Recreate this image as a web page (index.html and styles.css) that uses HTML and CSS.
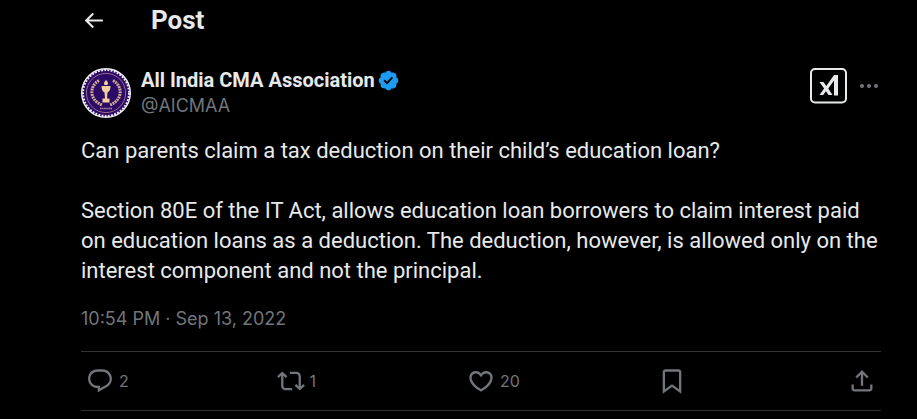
FILE: index.html
```html
<!DOCTYPE html>
<html lang="en">
<head>
<meta charset="utf-8">
<meta name="viewport" content="width=device-width, initial-scale=1">
<title>Post</title>
<link rel="stylesheet" href="styles.css">
</head>
<body>
<main class="page">
  <header class="topbar">
    <button class="icon-button" type="button" aria-label="Back">
      <svg class="icon back" viewBox="0 0 24 24"><path d="M7.414 13l5.043 5.04-1.414 1.42L3.586 12l7.457-7.46 1.414 1.42L7.414 11H21v2H7.414z"/></svg>
    </button>
    <h1 class="title">Post</h1>
  </header>
  <article class="post">
    <div class="author">
      <svg class="avatar" viewBox="0 0 50 50" aria-hidden="true">
        <circle cx="25" cy="25" r="24.500" fill="#2c0b66"/>
        <circle cx="25" cy="25" r="24.300" fill="none" stroke="#f1eef6" stroke-width="1.400"/>
        <circle cx="25" cy="25" r="23" fill="none" stroke="#f1eef6" stroke-width="2" stroke-dasharray="1.8 1.412"/>
        <circle cx="25" cy="25" r="19.600" fill="none" stroke="#a98296" stroke-width=".8"/>
        <g fill="none" stroke="#d3ad91" stroke-width="3" stroke-dasharray="1.9 .8">
          <path d="M18 12.500C8 18 8 32 21 37"/>
          <path d="M32 12.500C42 18 42 32 29 37"/>
        </g>
        <path d="M25 12q3 2.500 1.500 5h-3q-1.500-2 1.500-5zM20.500 18h9q0 5-3 6.500l-.5 6h2.500v4h-7v-4H24l-.5-6q-3-1.500-3-6.500z" fill="#efcf9c"/>
        <path d="M19 40.500h12" stroke="#b48c97" stroke-width="1.600" stroke-dasharray="1.300 .5"/>
      </svg>
      <div class="names">
        <div class="name-row">
          <a class="name" href="#profile">All India CMA Association</a>
          <svg class="verified" viewBox="0 0 22 22" aria-hidden="true"><path d="M20.396 11c-.018-.646-.215-1.275-.57-1.816-.354-.54-.852-.972-1.438-1.246.223-.607.27-1.264.14-1.897-.131-.634-.437-1.218-.882-1.687-.47-.445-1.053-.75-1.687-.882-.633-.13-1.29-.083-1.897.14-.273-.587-.704-1.086-1.245-1.44S11.647 1.62 11 1.604c-.646.017-1.273.213-1.813.568s-.969.854-1.24 1.44c-.608-.223-1.267-.272-1.902-.14-.635.13-1.22.436-1.69.882-.445.47-.749 1.055-.878 1.688-.13.633-.08 1.29.144 1.896-.587.274-1.087.705-1.443 1.245-.356.54-.555 1.17-.574 1.817.02.647.218 1.276.574 1.817.356.54.856.972 1.443 1.245-.224.606-.274 1.263-.144 1.896.13.634.433 1.218.877 1.688.47.443 1.054.747 1.687.878.633.132 1.29.084 1.897-.136.274.586.705 1.084 1.246 1.439.54.354 1.17.551 1.816.569.647-.016 1.276-.213 1.817-.567s.972-.854 1.245-1.44c.604.239 1.266.296 1.903.164.636-.132 1.22-.447 1.68-.907.46-.46.776-1.044.908-1.681s.075-1.299-.165-1.903c.586-.274 1.084-.705 1.439-1.246.354-.54.551-1.17.569-1.816zM9.662 14.85l-3.429-3.428 1.293-1.302 2.072 2.072 4.4-4.794 1.347 1.246z"/></svg>
        </div>
        <a class="handle" href="#profile">@AICMAA</a>
      </div>
      <div class="tools">
        <button class="icon-button" type="button" aria-label="Explain this post">
          <svg class="explain" viewBox="0 0 37 36"><rect x="1" y="1" width="35" height="33.500" rx="4" fill="none" stroke="#e7e9ea" stroke-width="2"/><path d="M9.500 14h4l2.800 4L24 7h4v20.500h-4V12.500L18.300 20.600l4.200 6.400h-4l-2.600-3.800-2.700 3.800H9.500l4.600-6.400z" fill="#e7e9ea"/></svg>
        </button>
        <button class="icon-button" type="button" aria-label="More">
          <svg class="more" viewBox="0 0 20 20"><circle cx="3" cy="10" r="2"/><circle cx="10" cy="10" r="2"/><circle cx="17" cy="10" r="2"/></svg>
        </button>
      </div>
    </div>
    <div class="body">
      <p>Can parents claim a tax deduction on their child’s education loan?</p>
      <p>Section 80E of the IT Act, allows education loan borrowers to claim interest paid on education loans as a deduction. The deduction, however, is allowed only on the interest component and not the principal.</p>
    </div>
    <time class="date" datetime="2022-09-13T22:54">10:54 PM · Sep 13, 2022</time>
    <div class="actions">
      <button class="action" type="button" aria-label="2 replies">
        <svg class="icon" viewBox="0 0 24 24"><path d="M1.751 10c0-4.42 3.584-8 8.005-8h4.366c4.49 0 8.129 3.64 8.129 8.13 0 2.96-1.607 5.68-4.196 7.11l-8.054 4.46v-3.69h-.067c-4.49.1-8.183-3.51-8.183-8.01zm8.005-6c-3.317 0-6.005 2.69-6.005 6 0 3.37 2.77 6.08 6.138 6.01l.351-.01h1.761v2.3l5.087-2.81c1.951-1.08 3.163-3.13 3.163-5.36 0-3.39-2.744-6.13-6.129-6.13H9.756z"/></svg><span>2</span>
      </button>
      <button class="action" type="button" aria-label="1 repost">
        <svg class="icon" viewBox="0 0 24 24"><path d="M4.5 3.88l4.432 4.14-1.364 1.46L5.5 7.55V16c0 1.1.896 2 2 2H13v2H7.5c-2.209 0-4-1.79-4-4V7.55L1.432 9.48.068 8.02 4.5 3.88zM16.5 6H11V4h5.5c2.209 0 4 1.79 4 4v8.45l2.068-1.93 1.364 1.46-4.432 4.14-4.432-4.14 1.364-1.46 2.068 1.93V8c0-1.1-.896-2-2-2z"/></svg><span>1</span>
      </button>
      <button class="action" type="button" aria-label="20 likes">
        <svg class="icon" viewBox="0 0 24 24"><path d="M16.697 5.5c-1.222-.06-2.679.51-3.89 2.16l-.805 1.09-.806-1.09C9.984 6.01 8.526 5.44 7.304 5.5c-1.243.07-2.349.78-2.91 1.91-.552 1.12-.633 2.78.479 4.82 1.074 1.97 3.257 4.27 7.129 6.61 3.87-2.34 6.052-4.64 7.126-6.61 1.111-2.04 1.03-3.7.477-4.82-.561-1.13-1.666-1.84-2.908-1.91zm4.187 7.69c-1.351 2.48-4.001 5.12-8.379 7.67l-.503.3-.504-.3c-4.379-2.55-7.029-5.19-8.382-7.67-1.36-2.5-1.41-4.86-.514-6.67.887-1.79 2.647-2.91 4.601-3.01 1.651-.09 3.368.56 4.798 2.01 1.429-1.45 3.146-2.1 4.796-2.01 1.954.1 3.714 1.22 4.601 3.01.896 1.81.846 4.17-.514 6.67z"/></svg><span>20</span>
      </button>
      <button class="action" type="button" aria-label="Bookmark">
        <svg class="icon" viewBox="0 0 24 24"><path d="M4 4.5C4 3.12 5.119 2 6.5 2h11C18.881 2 20 3.12 20 4.5v18.44l-8-5.71-8 5.71V4.5zM6.5 4c-.276 0-.5.22-.5.5v14.56l6-4.29 6 4.29V4.5c0-.28-.224-.5-.5-.5h-11z"/></svg>
      </button>
      <button class="action" type="button" aria-label="Share">
        <svg class="icon" viewBox="0 0 24 24"><path d="M12 2.59l5.7 5.7-1.41 1.42L13 6.41V16h-2V6.41l-3.3 3.3-1.41-1.42L12 2.59zM21 15l-.02 3.51c0 1.38-1.12 2.49-2.5 2.49H5.5C4.11 21 3 19.88 3 18.5V15h2v3.5c0 .28.22.5.5.5h12.98c.28 0 .5-.22.5-.5L19 15h2z"/></svg>
      </button>
    </div>
  </article>
</main>
</body>
</html>
```
FILE: styles.css
```css
* {
  box-sizing: border-box;
}

body {
  margin: 0;
  background: #000;
  color: #e7e9ea;
  font-family: Inter, "Liberation Sans", sans-serif;
}

button {
  padding: 0;
  border: 0;
  background: none;
  color: inherit;
  font: inherit;
  cursor: pointer;
}

a {
  color: inherit;
  text-decoration: none;
}

svg {
  display: block;
  flex: none;
}

.page {
  padding: 0 36px 0 81px;
}

.topbar {
  display: flex;
  align-items: center;
  gap: 45px;
  height: 40px;
}

.title,
.name,
.body {
  font-family: Roboto, "Liberation Sans", sans-serif;
}

.title {
  margin: 0;
  font-size: 26px;
  line-height: 30px;
  font-weight: 700;
}

.icon {
  width: 28px;
  height: 28px;
  fill: currentColor;
}

.back {
  width: 25px;
  height: 25px;
}

.author {
  display: flex;
  align-items: flex-start;
  gap: 10px;
  padding-top: 28px;
}

.avatar {
  width: 50px;
  height: 50px;
}

.names {
  flex: 1;
  min-width: 0;
  line-height: 25px;
}

.name-row {
  display: flex;
  align-items: center;
  gap: 2px;
}

.name {
  font-size: 20px;
  font-weight: 700;
}

.verified {
  width: 23px;
  height: 23px;
  fill: #1d9bf0;
}

.handle {
  display: block;
  color: #71767b;
  font-size: 18px;
}

.tools {
  display: flex;
  align-items: center;
  gap: 12px;
}

.explain {
  width: 37px;
  height: 36px;
}

.more {
  width: 20px;
  height: 20px;
  margin-right: 2px;
  fill: #71767b;
}

.body {
  display: grid;
  gap: 30px;
  padding-top: 18px;
  font-size: 22px;
  line-height: 30px;
}

.body p {
  margin: 0;
}

.date {
  display: block;
  padding: 20px 0;
  color: #71767b;
  font-size: 18px;
  line-height: 25px;
}

.actions {
  display: grid;
  grid-template-columns: repeat(4, 1fr) 28px;
  padding: 15px 5px;
  border: solid #2f3336;
  border-width: 1px 0;
}

.action {
  display: flex;
  align-items: center;
  gap: 5px;
  color: #71767b;
  font-size: 16px;
  line-height: 28px;
}
```
